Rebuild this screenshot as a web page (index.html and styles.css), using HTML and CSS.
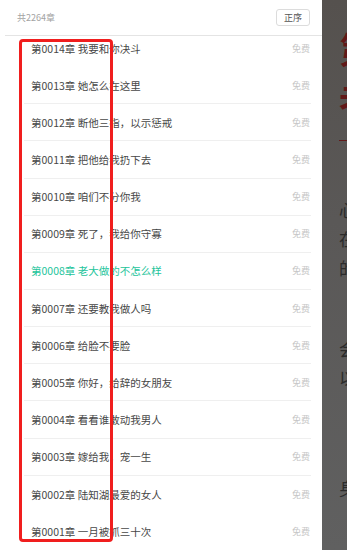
FILE: index.html
```html
<!DOCTYPE html>
<html lang="zh-CN">
<head>
<meta charset="utf-8">
<title>目录</title>
<link rel="stylesheet" href="styles.css">
</head>
<body>
<div class="panel">
  <div class="head">
    <span class="count">共2264章</span>
    <button class="sort">正序</button>
  </div>
  <div class="list">
    <ul class="rows">
      <li class="row"><span class="name">第0014章 我要和你决斗</span><span class="free">免费</span></li>
      <li class="row line"><span class="name">第0013章 她怎么在这里</span><span class="free">免费</span></li>
      <li class="row line"><span class="name">第0012章 断他三指，以示惩戒</span><span class="free">免费</span></li>
      <li class="row line"><span class="name">第0011章 把他给我扔下去</span><span class="free">免费</span></li>
      <li class="row line"><span class="name">第0010章 咱们不分你我</span><span class="free">免费</span></li>
      <li class="row line"><span class="name">第0009章 死了，我给你守寡</span><span class="free">免费</span></li>
      <li class="row line current"><span class="name">第0008章 老大做的不怎么样</span><span class="free">免费</span></li>
      <li class="row line"><span class="name">第0007章 还要教我做人吗</span><span class="free">免费</span></li>
      <li class="row line"><span class="name">第0006章 给脸不要脸</span><span class="free">免费</span></li>
      <li class="row line"><span class="name">第0005章 你好，给辞的女朋友</span><span class="free">免费</span></li>
      <li class="row line"><span class="name">第0004章 看看谁敢动我男人</span><span class="free">免费</span></li>
      <li class="row line"><span class="name">第0003章 嫁给我，宠一生</span><span class="free">免费</span></li>
      <li class="row"><span class="name">第0002章 陆知湖最爱的女人</span><span class="free">免费</span></li>
      <li class="row"><span class="name">第0001章 一月被抓三十次</span><span class="free">免费</span></li>
    </ul>
  </div>
</div>
<div class="reader">
  <div class="page">
    <h1 class="title">第0008章<br>老大做的不怎么样</h1>
    <p class="para"><span>心里一阵发紧，她不敢</span><span>在这个时候多说一句话</span><span>的样子让人心疼。</span></p>
    <p class="para"><span>会议室里安静得出奇，</span><span>以往的热闹全都不见了。</span></p>
    <p class="para last"><span>身后传来一阵脚步声。</span></p>
  </div>
</div>
<div class="mark"></div>
</body>
</html>
```

FILE: styles.css
```css
* {
  box-sizing: border-box;
}

html, body {
  margin: 0;
  padding: 0;
}

body {
  position: relative;
  width: 347px;
  height: 550px;
  overflow: hidden;
  display: flex;
  font-family: "Noto Sans CJK SC", "Noto Sans", sans-serif;
  background: #ffffff;
}

.panel {
  width: 322px;
  flex: none;
  display: flex;
  flex-direction: column;
  background: #ffffff;
}

.head {
  height: 36px;
  flex: none;
  margin-left: 5px;
  padding: 0 12px 0 12px;
  display: flex;
  align-items: center;
  justify-content: space-between;
  border-bottom: 1px solid #e4e4e4;
}

.count {
  font-size: 9px;
  color: #a3a3a3;
  line-height: 1;
}

.sort {
  width: 34px;
  height: 17px;
  padding: 0;
  margin: 0;
  font-family: inherit;
  font-size: 9px;
  line-height: 15px;
  color: #555555;
  background: #ffffff;
  border: 1px solid #dcdcdc;
  border-radius: 3px;
}

.list {
  flex: 1;
  overflow: hidden;
}

.rows {
  list-style: none;
  margin: -6px 0 0 0;
  padding: 0;
}

.row {
  height: 37.15px;
  margin: 0 11px 0 24px;
  padding: 0 1px 0 7px;
  display: flex;
  align-items: center;
  justify-content: space-between;
}

.row.line {
  border-bottom: 1px solid #efefef;
}

.name {
  font-size: 10.5px;
  color: #474747;
  white-space: nowrap;
}

.current .name {
  color: #1dc49b;
}

.free {
  font-size: 9px;
  color: #c6c6c6;
}

.reader {
  flex: 1;
  overflow: hidden;
  background: linear-gradient(#55514e, #5a5857 40%, #606060);
}

.page {
  width: 320px;
  padding: 23px 0 0 17px;
}

.title {
  margin: 0;
  padding-bottom: 17px;
  font-size: 36px;
  line-height: 50px;
  font-weight: 700;
  color: #621818;
  border-bottom: 1px solid #621a1a;
  white-space: nowrap;
}

.para {
  margin: 52px 0 0 0;
  font-size: 17px;
  line-height: 29px;
  color: #2b2b2b;
}

.para:first-of-type {
  margin-top: 54px;
}

.para span {
  display: block;
  white-space: nowrap;
}

.para.last {
  margin-top: 81px;
}

.mark {
  position: absolute;
  left: 19px;
  top: 39px;
  width: 94px;
  height: 503px;
  border: 3px solid #f01e1e;
  border-radius: 4px;
}
```
